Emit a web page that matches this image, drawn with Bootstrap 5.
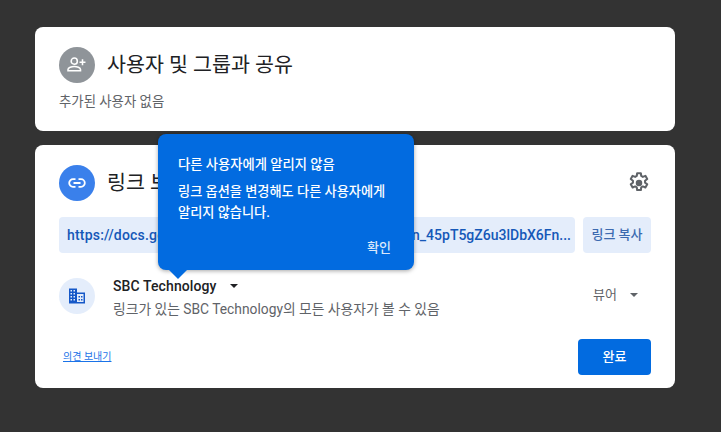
<!DOCTYPE html>
<html lang="ko">

<head>
    <title>공유</title>
    <link rel="stylesheet" href="https://cdn.jsdelivr.net/npm/bootstrap@5.3.0/dist/css/bootstrap.min.css">
    <style>
        body {
            background: #333333;
            font-family: Roboto, "Noto Sans CJK KR", sans-serif;
            color: #202124;
            overflow: hidden;
        }

        .dialog-wrap {
            position: relative;
            width: 640px;
            margin: 27px 0 0 35px;
        }

        .share-card {
            background: #fff;
            border-radius: 8px;
            padding: 20px 24px 13px;
        }

        .people-card {
            height: 104px;
            margin-bottom: 14px;
        }

        .link-card {
            height: 243px;
        }

        .round-icon {
            width: 36px;
            height: 36px;
            border-radius: 50%;
            flex: none;
        }

        .icon-grey {
            background: #8f9499;
        }

        .icon-blue {
            background: #3a80eb;
        }

        .icon-pale {
            background: #e4edfb;
        }

        .share-title {
            font-size: 20.6px;
            line-height: 28px;
            margin: 0 0 0 12px;
            font-weight: 400;
            white-space: nowrap;
        }

        .grey-text {
            color: #5f6368;
            font-size: 13.4px;
            line-height: 18px;
        }

        .no-people {
            margin-top: 10px;
        }

        .gear-icon {
            margin-right: -1px;
        }

        .url-row {
            margin-top: 16px;
        }

        .url-box {
            background: #e4edfb;
            color: #1558b8;
            height: 36px;
            border-radius: 4px;
            font-size: 14px;
            font-weight: 500;
            line-height: 36px;
            padding: 0 4px 0 8px;
            flex: 1;
            min-width: 0;
            white-space: nowrap;
            text-align: right;
        }

        .url-start {
            float: left;
            letter-spacing: .2px;
        }

        .copy-btn {
            background: #e4edfb;
            color: #3c6ab0;
            width: 68px;
            height: 36px;
            border-radius: 4px;
            border: 0;
            font-size: 13px;
            font-weight: 500;
            padding: 0;
            flex: none;
        }

        .org-row {
            margin-top: 25px;
        }

        .org-text {
            margin-left: 18px;
            margin-top: -1px;
        }

        .org-name {
            font-size: 14px;
            font-weight: 500;
            line-height: 18px;
            letter-spacing: .1px;
        }

        .org-desc {
            font-size: 13.8px;
            margin-top: 5px;
        }

        .access-pick {
            font-size: 13px;
            margin-left: auto;
            margin-right: 13px;
            margin-top: 8px;
            gap: 13px;
        }

        .caret-down {
            display: inline-block;
            border-left: 4px solid transparent;
            border-right: 4px solid transparent;
            border-top: 4px solid #202124;
        }

        .caret-org {
            margin-left: 13px;
        }

        .caret-grey {
            border-top-color: #5f6368;
        }

        .feedback-link {
            font-size: 10px;
            line-height: 12px;
            color: #1a73e8;
            margin-left: 4px;
        }

        .done-btn {
            background: #026be0;
            color: #fff;
            width: 73px;
            height: 36px;
            font-size: 13px;
            font-weight: 500;
            border: 0;
            border-radius: 4px;
            padding: 0;
        }

        .notice-pop {
            position: absolute;
            left: 123px;
            top: 107px;
            width: 256px;
            height: 136px;
            background: #026be0;
            color: #fff;
            border-radius: 8px;
            padding: 22px 20px 0;
            box-shadow: 0 1px 4px rgba(0, 0, 0, .35);
        }

        .notice-pop::after {
            content: "";
            position: absolute;
            left: 11px;
            bottom: -9px;
            border-left: 9px solid transparent;
            border-right: 9px solid transparent;
            border-top: 9px solid #026be0;
        }

        .notice-head {
            font-size: 13.3px;
            font-weight: 500;
            line-height: 18px;
            margin-bottom: 7px;
        }

        .notice-body {
            font-size: 13.2px;
            font-weight: 500;
            line-height: 21px;
        }

        .notice-ok {
            position: absolute;
            right: 23px;
            bottom: 13px;
            font-size: 13px;
            font-weight: 500;
            color: #dbe8fb;
        }
    </style>
</head>

<body>
    <div class="dialog-wrap">
        <!-- people -->
        <div class="share-card people-card">
            <div class="d-flex align-items-center">
                <div class="round-icon icon-grey d-flex align-items-center justify-content-center">
                    <svg width="22" height="22" viewBox="0 0 20 20" fill="none" stroke="#fff" stroke-width="1.4">
                        <circle cx="7.5" cy="6.5" r="2.8" />
                        <path d="M1.8 15.2v-1c0-1.800 3.400-2.900 5.700-2.900s5.700 1.100 5.700 2.900v1z" />
                        <path d="M15 4.800v5.400M12.300 7.500h5.400" />
                    </svg>
                </div>
                <h1 class="share-title">사용자 및 그룹과 공유</h1>
            </div>
            <div class="grey-text no-people">추가된 사용자 없음</div>
        </div>

        <!-- link -->
        <div class="share-card link-card d-flex flex-column">
            <div class="d-flex align-items-center">
                <div class="round-icon icon-blue d-flex align-items-center justify-content-center">
                    <svg width="20" height="20" viewBox="0 0 20 20" fill="none" stroke="#fff" stroke-width="1.8">
                        <path d="M8.500 6.200H6a3.800 3.800 0 0 0 0 7.600h2.500M11.500 6.200H14a3.800 3.800 0 0 1 0 7.600h-2.500M6.500 10h7" />
                    </svg>
                </div>
                <h2 class="share-title">링크 보기</h2>
                <svg class="ms-auto gear-icon" width="26" height="26" viewBox="0 0 24 24" fill="none" stroke="#5f6368" stroke-width="1.9" stroke-linejoin="round">
                    <path d="M13.700 3l.35 2.500 1.500.85 2.350-.95 1.700 2.950-2 1.550v1.700l2 1.550-1.700 2.950-2.350-.95-1.500.85-.35 2.500h-3.400l-.35-2.500-1.500-.85-2.350.95-1.700-2.950 2-1.550v-1.700l-2-1.550 1.700-2.950 2.350.95 1.500-.85.35-2.500z" />
                    <circle cx="12" cy="12" r="3" fill="#5f6368" stroke="none" />
                </svg>
            </div>

            <div class="d-flex gap-2 url-row">
                <div class="url-box"><span class="url-start">https://docs.google.com</span>n_45pT5gZ6u3lDbX6Fn...</div>
                <button class="copy-btn" type="button">링크 복사</button>
            </div>

            <div class="d-flex align-items-start org-row">
                <div class="round-icon icon-pale d-flex align-items-center justify-content-center">
                    <svg width="18" height="18" viewBox="0 0 18 18" fill="#1558c8">
                        <path fill-rule="evenodd"
                            d="M1 1.500h8v4h8v11H1zM2.500 3v1.500H4V3zm3 0v1.500H7V3zm-3 3v1.500H4V6zm3 0v1.500H7V6zm-3 3v1.500H4V9zm3 0v1.500H7V9zm-3 3v1.500H4V12zm3 0v1.500H7V12zM9 7v8h6.500V7zm1.500 2H12v1.500h-1.500zm2.500 0h1.500v1.500H13zm-2.500 3H12v1.500h-1.500zm2.500 0h1.500v1.500H13z" />
                    </svg>
                </div>
                <div class="org-text">
                    <div class="org-name d-flex align-items-center">SBC Technology<span class="caret-down caret-org"></span></div>
                    <div class="grey-text org-desc">링크가 있는 SBC Technology의 모든 사용자가 볼 수 있음</div>
                </div>
                <div class="grey-text access-pick d-flex align-items-center">뷰어<span class="caret-down caret-grey"></span></div>
            </div>

            <div class="d-flex align-items-center justify-content-between mt-auto">
                <a href="#" class="feedback-link">의견 보내기</a>
                <button class="done-btn" type="button">완료</button>
            </div>
        </div>

        <!-- notice popup -->
        <div class="notice-pop">
            <div class="notice-head">다른 사용자에게 알리지 않음</div>
            <div class="notice-body">링크 옵션을 변경해도 다른 사용자에게<br>알리지 않습니다.</div>
            <div class="notice-ok">확인</div>
        </div>
    </div>

    <script src="https://cdn.jsdelivr.net/npm/bootstrap@5.3.0/dist/js/bootstrap.bundle.min.js"></script>
</body>

</html>
